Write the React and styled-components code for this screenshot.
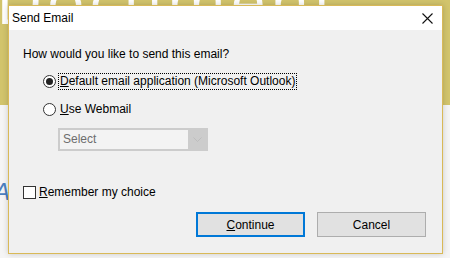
import React from "react";
import styled, { createGlobalStyle } from "styled-components";

const Global = createGlobalStyle`
  html, body { margin: 0; padding: 0; }
  body { background: #f4f4f4; font-family: "Liberation Sans", Arial, sans-serif; }
`;

const Stage = styled.div`
  position: relative;
  width: 450px;
  height: 258px;
  overflow: hidden;
  background: linear-gradient(to bottom, #d2c46c 0, #d2c46c 105px, #f5f5f5 105px);
`;

const Watermark = styled.div`
  position: absolute;
  top: -44px;
  left: -4px;
  font-family: "Open Sans", sans-serif;
  font-size: 64px;
  font-weight: 400;
  letter-spacing: 4px;
  color: #ffffff;
  white-space: nowrap;
`;

const BackLetter = styled.div`
  position: absolute;
  left: -6px;
  top: 178px;
  font-family: "Liberation Sans", sans-serif;
  font-style: italic;
  font-size: 24px;
  color: #4a7fc0;
`;

const Dialog = styled.div`
  position: relative;
  z-index: 1;
  margin: 5px 0 0 8px;
  width: 435px;
  height: 249px;
  box-sizing: border-box;
  border: 1px solid #d9b957;
  background: #f0f0f0;
  box-shadow: 0 0 6px rgba(0, 0, 0, 0.18);
  display: flex;
  flex-direction: column;
  font-size: 12px;
  color: #000;
`;

const TitleBar = styled.div`
  height: 24px;
  background: #ffffff;
  display: flex;
  align-items: center;
  justify-content: space-between;
  padding: 0 9px 0 3px;
`;

const Title = styled.span`
  font-size: 12px;
  line-height: 16px;
`;

const CloseIcon = styled.svg`
  width: 11px;
  height: 11px;
  display: block;
`;

const Body = styled.div`
  flex: 1;
  display: flex;
  flex-direction: column;
  padding: 16px 16px 0 14px;
`;

const Question = styled.div`
  line-height: 16px;
  height: 16px;
`;

const Options = styled.div`
  display: flex;
  flex-direction: column;
  gap: 10px;
  margin: 10px 0 0 20px;
`;

const OptionRow = styled.label`
  display: flex;
  align-items: center;
  height: 18px;
  gap: 3px;
`;

const Radio = styled.span`
  width: 13px;
  height: 13px;
  box-sizing: border-box;
  border: 1px solid #333;
  border-radius: 50%;
  background: #fff;
  display: flex;
  align-items: center;
  justify-content: center;
  &::after {
    content: "";
    width: 7px;
    height: 7px;
    border-radius: 50%;
    background: ${(p) => (p.$checked ? "#222" : "transparent")};
  }
`;

const Label = styled.span`
  line-height: 15px;
  padding: 0 1px;
  border: 1px dotted ${(p) => (p.$focused ? "#000" : "transparent")};
  margin-left: -1px;
`;

const Key = styled.span`
  text-decoration: underline;
`;

const SelectBox = styled.div`
  margin: 10px 0 0 35px;
  width: 150px;
  height: 23px;
  box-sizing: border-box;
  border: 1px solid #cccccc;
  background: #cccccc;
  display: flex;
`;

const SelectText = styled.div`
  flex: 1;
  background: #f3f3f3;
  margin: 1px 0 1px 1px;
  color: #6d6d6d;
  line-height: 19px;
  padding-left: 3px;
`;

const SelectArrow = styled.div`
  width: 19px;
  display: flex;
  align-items: center;
  justify-content: center;
`;

const CheckRow = styled.label`
  display: flex;
  align-items: center;
  gap: 3px;
  height: 16px;
  margin-top: 33px;
`;

const Checkbox = styled.span`
  width: 13px;
  height: 13px;
  box-sizing: border-box;
  border: 1px solid #333;
  background: #fff;
`;

const Buttons = styled.div`
  display: flex;
  justify-content: flex-end;
  gap: 12px;
  margin-top: 12px;
`;

const Button = styled.button`
  width: 109px;
  height: 25px;
  box-sizing: border-box;
  background: #e1e1e1;
  border: ${(p) => (p.$primary ? "2px solid #0078d7" : "1px solid #adadad")};
  font-family: inherit;
  font-size: 12px;
  color: #000;
  padding: 0;
  cursor: default;
`;

export default function App() {
  return (
    <>
      <Global />
      <Stage>
        <Watermark>Document</Watermark>
        <BackLetter>A</BackLetter>
        <Dialog>
          <TitleBar>
            <Title>Send Email</Title>
            <CloseIcon viewBox="0 0 11 11">
              <path d="M0.5 0.5 L10.5 10.5 M10.5 0.5 L0.5 10.5" stroke="#111" strokeWidth="1.1" fill="none" />
            </CloseIcon>
          </TitleBar>
          <Body>
            <Question>How would you like to send this email?</Question>
            <Options>
              <OptionRow>
                <Radio $checked />
                <Label $focused>
                  <Key>D</Key>efault email application (Microsoft Outlook)
                </Label>
              </OptionRow>
              <OptionRow>
                <Radio />
                <Label>
                  <Key>U</Key>se Webmail
                </Label>
              </OptionRow>
            </Options>
            <SelectBox>
              <SelectText>Select</SelectText>
              <SelectArrow>
                <svg width="9" height="5" viewBox="0 0 9 5">
                  <path d="M0.5 0.5 L4.5 4.5 L8.5 0.5" stroke="#bdbdbd" fill="none" />
                </svg>
              </SelectArrow>
            </SelectBox>
            <CheckRow>
              <Checkbox />
              <span>
                <Key>R</Key>emember my choice
              </span>
            </CheckRow>
            <Buttons>
              <Button $primary>
                <Key>C</Key>ontinue
              </Button>
              <Button>Cancel</Button>
            </Buttons>
          </Body>
        </Dialog>
      </Stage>
    </>
  );
}
